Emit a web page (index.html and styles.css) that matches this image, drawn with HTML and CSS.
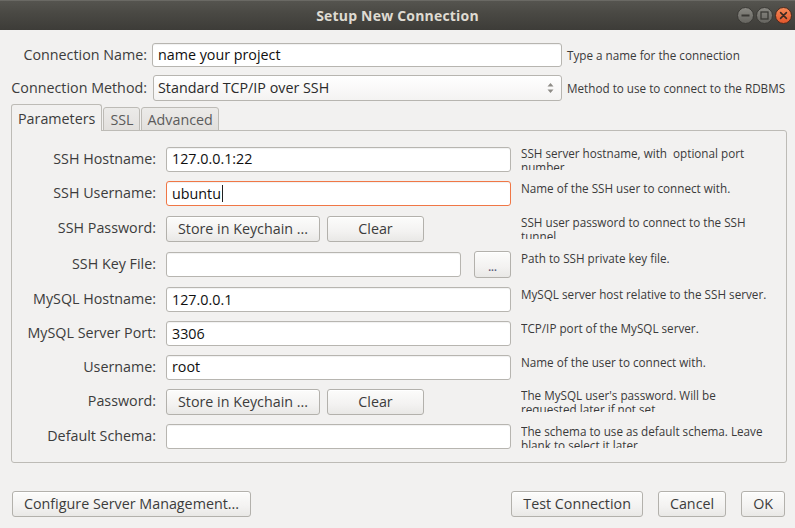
FILE: index.html
```html
<!DOCTYPE html>
<html>
<head>
<meta charset="utf-8">
<title>Setup New Connection</title>
<link rel="stylesheet" href="styles.css">
</head>
<body>
<div class="window">
  <header class="titlebar">
    <div class="tb-side"></div>
    <div class="title">Setup New Connection</div>
    <div class="tb-side wctl">
      <svg class="wbtn" width="17" height="17" viewBox="0 0 17 17"><defs><linearGradient id="gg" x1="0" y1="0" x2="0" y2="1"><stop offset="0" stop-color="#8a8983"/><stop offset="1" stop-color="#64635e"/></linearGradient><linearGradient id="og" x1="0" y1="0" x2="0" y2="1"><stop offset="0" stop-color="#f58a58"/><stop offset="1" stop-color="#e2552a"/></linearGradient></defs><circle cx="8.5" cy="8.5" r="8" fill="url(#gg)" stroke="#3a3935" stroke-width="1"/><rect x="4.5" y="7.5" width="8" height="2" fill="#3a3935"/></svg>
      <svg class="wbtn" width="17" height="17" viewBox="0 0 17 17"><circle cx="8.5" cy="8.5" r="8" fill="url(#gg)" stroke="#3a3935" stroke-width="1"/><rect x="5" y="5" width="7" height="7" fill="none" stroke="#3a3935" stroke-width="1.3"/></svg>
      <svg class="wbtn" width="17" height="17" viewBox="0 0 17 17"><circle cx="8.5" cy="8.5" r="8" fill="url(#og)" stroke="#4a2a1e" stroke-width="1"/><path d="M5.6 5.6 L11.4 11.4 M11.4 5.6 L5.6 11.4" stroke="#3a2a22" stroke-width="1.6" stroke-linecap="round"/></svg>
    </div>
  </header>

  <main class="content">
    <div class="toprow row-name">
      <div class="lbl">Connection Name:</div>
      <div class="entry">name your project</div>
      <div class="hint">Type a name for the connection</div>
    </div>
    <div class="toprow row-method">
      <div class="lbl">Connection Method:</div>
      <div class="combo">
        <span>Standard TCP/IP over SSH</span>
        <svg class="arrows" width="7" height="12" viewBox="0 0 7 12"><path d="M3.5 1 L6.5 4.5 L0.5 4.5 Z M3.5 11 L6.5 7.5 L0.5 7.5 Z" fill="#8e8c87"/></svg>
      </div>
      <div class="hint">Method to use to connect to the RDBMS</div>
    </div>

    <nav class="tabs">
      <div class="tab active">Parameters</div>
      <div class="tab">SSL</div>
      <div class="tab">Advanced</div>
    </nav>

    <section class="panel">
      <div class="plbl">SSH Hostname:</div>
      <div class="entry">127.0.0.1:22</div>
      <div class="phint">SSH server hostname, with&nbsp; optional port<br>number.</div>

      <div class="plbl">SSH Username:</div>
      <div class="entry focus">ubuntu<span class="caret"></span></div>
      <div class="phint">Name of the SSH user to connect with.</div>

      <div class="plbl">SSH Password:</div>
      <div class="btnpair">
        <div class="btn w-store">Store in Keychain ...</div>
        <div class="btn w-clear">Clear</div>
      </div>
      <div class="phint">SSH user password to connect to the SSH<br>tunnel.</div>

      <div class="plbl">SSH Key File:</div>
      <div class="filepick">
        <div class="entry grow"></div>
        <div class="btn dots">...</div>
      </div>
      <div class="phint">Path to SSH private key file.</div>

      <div class="plbl">MySQL Hostname:</div>
      <div class="entry">127.0.0.1</div>
      <div class="phint">MySQL server host relative to the SSH server.</div>

      <div class="plbl">MySQL Server Port:</div>
      <div class="entry">3306</div>
      <div class="phint">TCP/IP port of the MySQL server.</div>

      <div class="plbl">Username:</div>
      <div class="entry">root</div>
      <div class="phint">Name of the user to connect with.</div>

      <div class="plbl">Password:</div>
      <div class="btnpair">
        <div class="btn w-store">Store in Keychain ...</div>
        <div class="btn w-clear">Clear</div>
      </div>
      <div class="phint">The MySQL user's password. Will be<br>requested later if not set.</div>

      <div class="plbl">Default Schema:</div>
      <div class="entry"></div>
      <div class="phint">The schema to use as default schema. Leave<br>blank to select it later.</div>
    </section>

    <footer class="footer">
      <div class="btn fbtn">Configure Server Management...</div>
      <div class="fright">
        <div class="btn fbtn">Test Connection</div>
        <div class="btn fbtn">Cancel</div>
        <div class="btn fbtn">OK</div>
      </div>
    </footer>
  </main>
</div>
</body>
</html>
```

FILE: styles.css
```css
* { box-sizing: border-box; }
html, body {
  margin: 0;
  padding: 0;
  background: #f2f1f0;
}
body {
  width: 795px;
  height: 528px;
  overflow: hidden;
  font-family: "Open Sans", "Noto Sans", "DejaVu Sans", sans-serif;
  font-size: 14.3px;
  color: #3c3c3c;
}
.window {
  width: 795px;
  height: 528px;
  display: flex;
  flex-direction: column;
}

/* title bar */
.titlebar {
  height: 30px;
  display: grid;
  grid-template-columns: 1fr auto 1fr;
  align-items: center;
  background: linear-gradient(to bottom, #55544f 0%, #4a4944 40%, #3d3c38 100%);
  border-top: 1px solid #6a6964;
}
.title {
  color: #dfdbd2;
  font-weight: bold;
  font-size: 14px;
  letter-spacing: 0.2px;
  padding-bottom: 1px;
}
.wctl {
  display: flex;
  justify-content: flex-end;
  gap: 2px;
  padding-right: 3px;
}
.wbtn { display: block; }

/* content */
.content {
  flex: 1;
  padding: 0 9px 0 11px;
  display: flex;
  flex-direction: column;
}
.toprow {
  display: grid;
  grid-template-columns: 136px 410px 1fr;
  column-gap: 5px;
  align-items: center;
}
.row-name { margin-top: 13px; height: 24px; }
.row-method { margin-top: 8px; height: 26px; }
.lbl {
  text-align: right;
  white-space: nowrap;
  padding-bottom: 1px;
}
.hint {
  font-size: 11.7px;
  white-space: nowrap;
  color: #3a3a3a;
  padding-bottom: 1px;
}

.entry {
  height: 25px;
  background: #ffffff;
  border: 1px solid #b7b5b0;
  border-radius: 3px;
  box-shadow: inset 0 1px 1px rgba(0,0,0,0.06);
  color: #101010;
  padding: 0 5px 1px 5px;
  display: flex;
  align-items: center;
  white-space: nowrap;
}
.row-name .entry { height: 24px; }
.entry.focus {
  border-color: #f07746;
}
.caret {
  display: inline-block;
  width: 1px;
  height: 17px;
  background: #202020;
  margin-left: 1px;
}
.combo {
  height: 26px;
  margin-left: 1px;
  border: 1px solid #b7b5b0;
  border-radius: 3px;
  background: linear-gradient(to bottom, #ffffff, #f4f3f2);
  color: #2a2a2a;
  display: flex;
  align-items: center;
  justify-content: space-between;
  padding: 0 7px 1px 4px;
}
.arrows { display: block; }

/* tabs */
.tabs {
  display: flex;
  align-items: flex-end;
  gap: 1px;
  height: 27px;
  margin-top: 3px;
  margin-bottom: -1px;
  position: relative;
  z-index: 1;
}
.tab {
  height: 24px;
  border: 1px solid #bdbbb6;
  border-radius: 3px 3px 0 0;
  background: linear-gradient(to bottom, #ecebe9, #e2e0dd);
  color: #5b5b5b;
  padding: 0 5px 0 6px;
  display: flex;
  align-items: center;
}
.tab.active {
  height: 27px;
  border-bottom: none;
  background: #f2f1f0;
  color: #3c3c3c;
  padding: 0 6px;
}

/* panel */
.panel {
  height: 333px;
  width: 776px;
  border: 1px solid #bdbbb6;
  border-radius: 0 3px 3px 3px;
  background: #f2f1f0;
  padding: 15px 0 0 0;
  display: grid;
  grid-template-columns: 144px 345px 1fr;
  grid-template-rows: 26px 25px 27px 27px 25px 25px 24px 27px 25px;
  column-gap: 10px;
  row-gap: 9px;
  align-items: center;
}
.plbl {
  text-align: right;
  white-space: nowrap;
  padding-bottom: 2px;
}
.phint {
  align-self: start;
  font-size: 11.7px;
  line-height: 14px;
  height: 24px;
  overflow: hidden;
  white-space: nowrap;
  color: #3a3a3a;
}
.btnpair {
  display: flex;
  gap: 7px;
  height: 26px;
}
.filepick {
  display: flex;
  gap: 13px;
  align-items: center;
  height: 27px;
}
.grow { flex: 1; }

/* buttons */
.btn {
  height: 26px;
  border: 1px solid #b3b1ac;
  border-radius: 3px;
  background: linear-gradient(to bottom, #fcfcfb 0%, #f3f2f1 60%, #e9e8e6 100%);
  box-shadow: inset 0 1px 0 #ffffff;
  color: #3c3c3c;
  display: flex;
  align-items: center;
  justify-content: center;
  white-space: nowrap;
  padding-bottom: 1px;
}
.w-store { width: 154px; }
.w-clear { width: 97px; }
.dots {
  width: 37px;
  height: 27px;
  color: #5a5a7a;
  font-weight: bold;
  font-size: 10px;
  padding-top: 6px;
}

/* footer */
.footer {
  margin-top: 28px;
  display: flex;
  justify-content: space-between;
  padding: 0 1px;
}
.fright {
  display: flex;
  gap: 15px;
}
.fbtn {
  padding: 0 11px 1px 11px;
  height: 26px;
}
```
